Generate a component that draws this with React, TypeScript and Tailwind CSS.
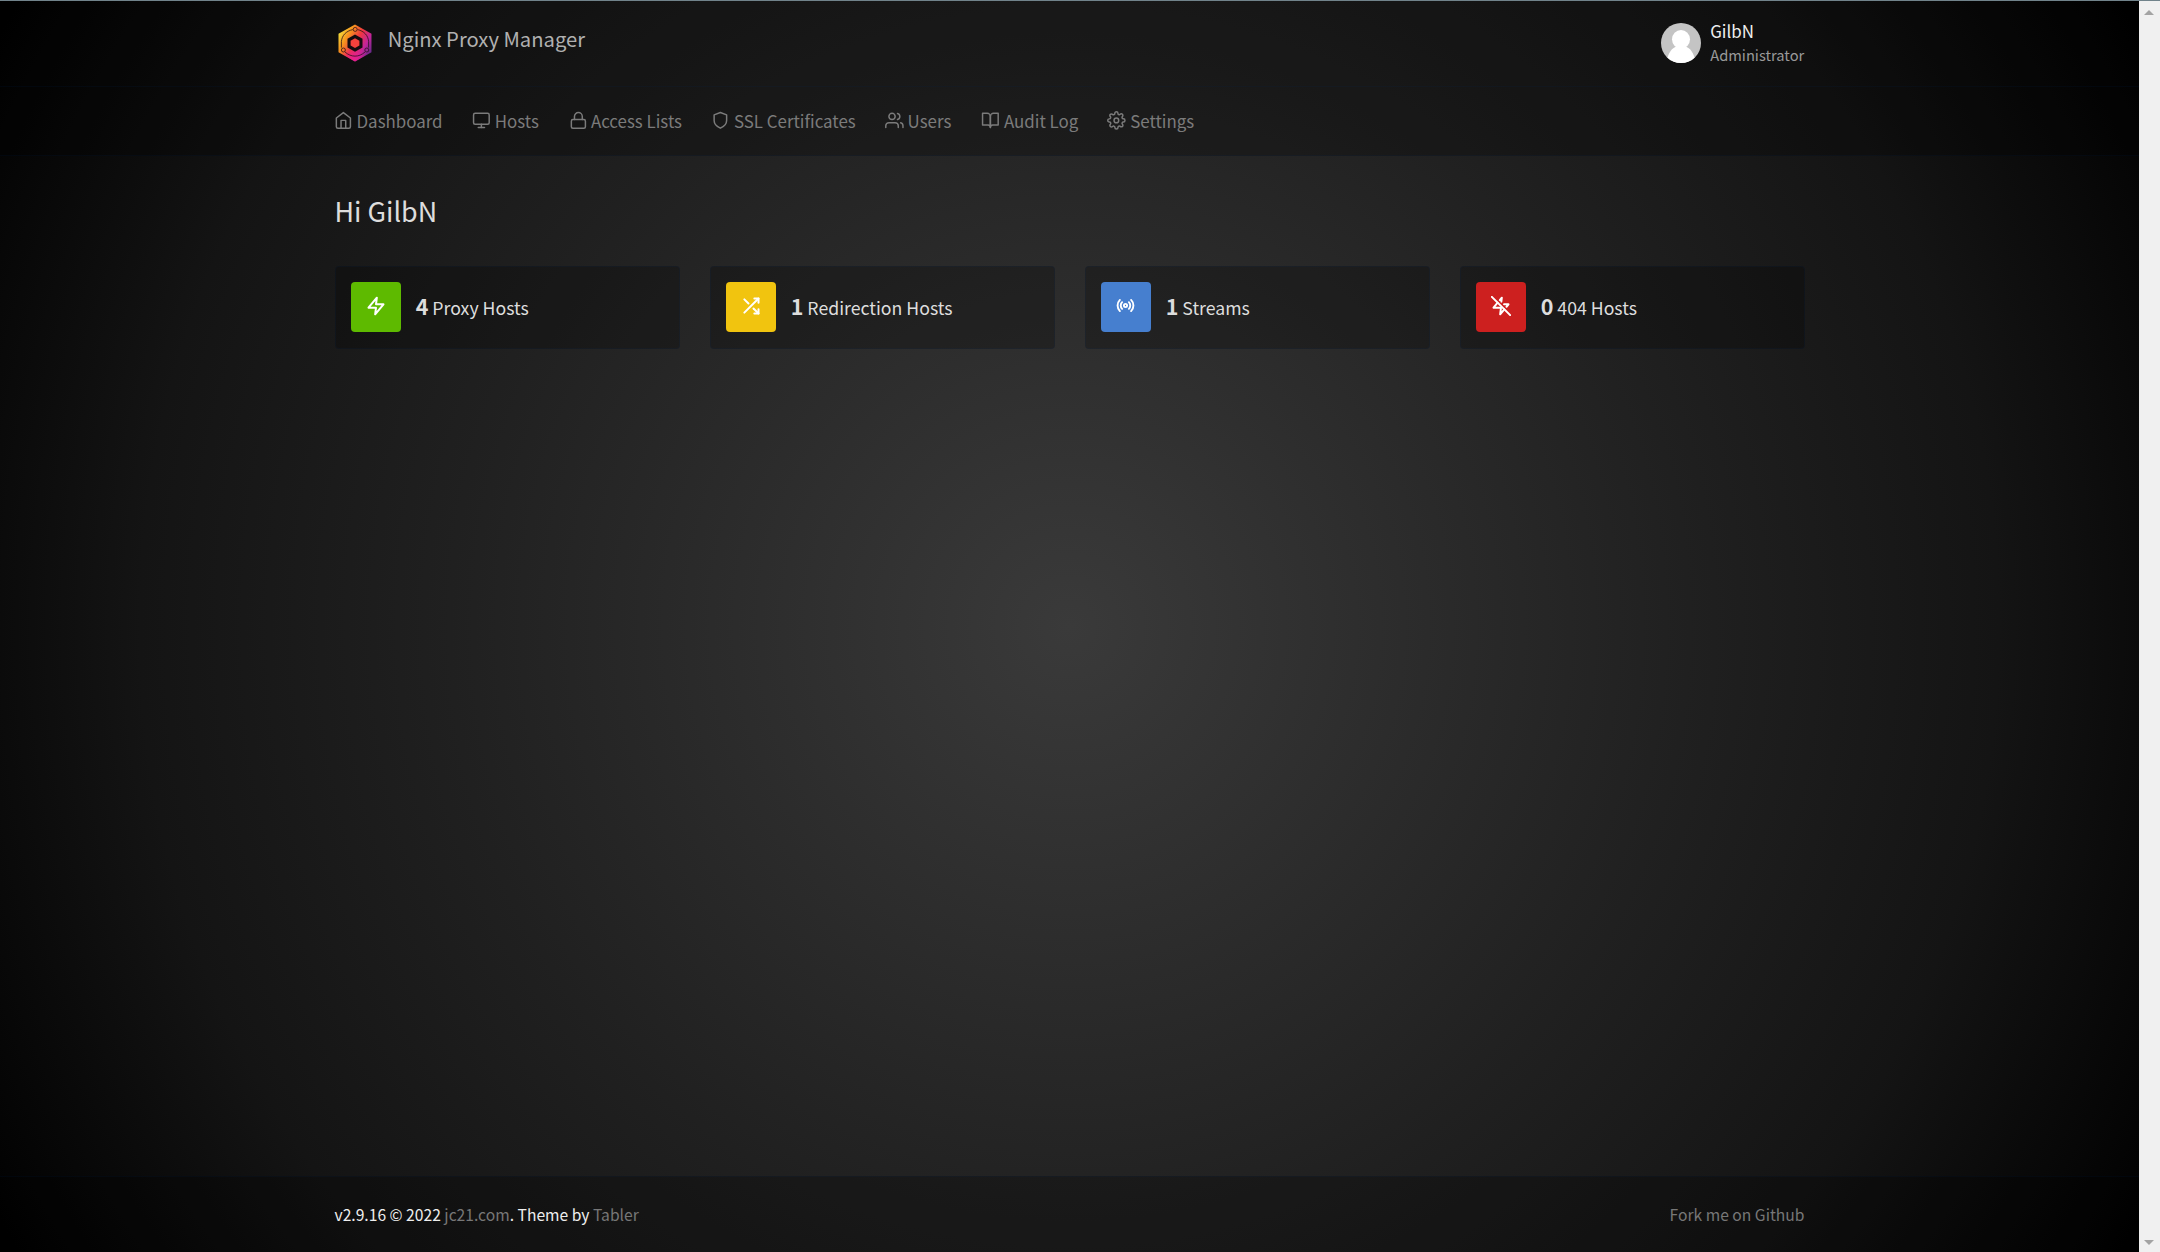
import type { ReactNode } from "react";
import { FiBookOpen, FiHome, FiLock, FiMonitor, FiRadio, FiSettings, FiShield, FiShuffle, FiUsers, FiZap, FiZapOff } from "react-icons/fi";

function Logo() {
  return (
    <svg viewBox="0 0 40 40" className="size-10" aria-hidden="true">
      <defs>
        <linearGradient id="ring" x1="3" y1="10" x2="37" y2="30" gradientUnits="userSpaceOnUse">
          <stop offset="0" stopColor="#f3e33c" />
          <stop offset="0.25" stopColor="#f7941e" />
          <stop offset="0.5" stopColor="#f0373f" />
          <stop offset="0.75" stopColor="#c4249a" />
          <stop offset="1" stopColor="#5b2a86" />
        </linearGradient>
        <radialGradient id="base" cx="19" cy="36" r="13" gradientUnits="userSpaceOnUse">
          <stop offset="0" stopColor="#e91e8c" />
          <stop offset="1" stopColor="#e91e8c" stopOpacity="0" />
        </radialGradient>
      </defs>
      <path d="M20 1.5 36.5 10.8V29.2L20 38.5 3.5 29.2V10.8Z" fill="url(#ring)" />
      <path d="M20 1.5 36.5 10.8V29.2L20 38.5 3.5 29.2V10.8Z" fill="url(#base)" />
      <path d="M20 11.5 27.5 15.8V24.4L20 28.7 12.5 24.4V15.8Z" fill="#150c10" />
      <path d="M20 15.2 24.4 17.7V22.5L20 25 15.6 22.5V17.7Z" fill="#f5413d" />
      <g fill="none" stroke="#241018" strokeOpacity="0.85" strokeWidth="0.9">
        <path d="M17.8 6.6C11 8 7 12.5 6.4 18.5V24.6M22.6 6.6C29 8 33.2 12.5 33.6 18.5V24.6M10 29C16 34.5 24 34.5 30 29" />
        <circle cx="20.2" cy="6.4" r="2" />
        <circle cx="8.4" cy="27" r="2" />
        <circle cx="31.8" cy="27" r="2" />
      </g>
    </svg>
  );
}

function Avatar() {
  return (
    <svg viewBox="0 0 40 40" className="size-10 rounded-full" aria-hidden="true">
      <rect width="40" height="40" fill="#c4c4c4" />
      <ellipse cx="20" cy="16.3" rx="9" ry="9.3" fill="#fff" />
      <path d="M5.5 40C6.5 30 11.5 24 16 23.5H24C28.5 24 33.5 30 34.5 40Z" fill="#fff" />
    </svg>
  );
}

const nav: { label: string; icon: ReactNode; item: string; cell: string }[] = [
  { label: "Dashboard", icon: <FiHome className="-ml-[0.8px] size-[18.75px]" strokeWidth={1.9} />, item: "w-[137.9px]", cell: "w-[22px]" },
  { label: "Hosts", icon: <FiMonitor className="-ml-[0.5px] size-[18.75px]" strokeWidth={1.9} />, item: "w-[97px]", cell: "w-[22.3px]" },
  { label: "Access Lists", icon: <FiLock className="-ml-[0.9px] size-[18.75px]" strokeWidth={1.9} />, item: "w-[143.3px]", cell: "w-[21.5px]" },
  { label: "SSL Certificates", icon: <FiShield className="-ml-[1.3px] size-[18.75px]" strokeWidth={1.9} />, item: "w-[172px]", cell: "w-[21.3px]" },
  { label: "Users", icon: <FiUsers className="ml-[0.3px] size-[18.75px]" strokeWidth={1.9} />, item: "w-[96.6px]", cell: "w-[22.9px]" },
  { label: "Audit Log", icon: <FiBookOpen className="size-[18.75px]" strokeWidth={1.9} />, item: "w-[126.2px]", cell: "w-[22.6px]" },
  { label: "Settings", icon: <FiSettings className="size-[18.75px]" strokeWidth={1.9} />, item: "w-[100px]", cell: "w-[22.8px]" },
];

const cards: { count: number; label: string; color: string; icon: ReactNode }[] = [
  { count: 4, label: "Proxy Hosts", color: "bg-[#5eba00]", icon: <FiZap className="size-5" strokeWidth={2.4} /> },
  { count: 1, label: "Redirection Hosts", color: "bg-[#f1c40f]", icon: <FiShuffle className="size-5" strokeWidth={2.4} /> },
  { count: 1, label: "Streams", color: "bg-[#467fcf]", icon: <FiRadio className="size-[19px]" strokeWidth={2.4} /> },
  { count: 0, label: "404 Hosts", color: "bg-[#cd201f]", icon: <FiZapOff className="size-5" strokeWidth={2.4} /> },
];

export default function App() {
  return (
    <div className="flex h-[1252px] w-[2160px] flex-col overflow-hidden border-t border-[#71838b] font-['Noto_Sans_CJK_SC','Noto_Sans',sans-serif]">
      <div className="flex min-h-0 flex-1">
        <div className="flex w-[2139px] flex-col bg-[radial-gradient(circle,#3a3a3a,#2d2d2d,#202020,#141414,#000000)]">
          <header className="h-[86px] border-b border-[#002864]/12 bg-black/25">
            <div className="mx-auto flex w-[1470px] justify-between">
              <div className="flex">
                <div className="mt-[22px]"><Logo /></div>
                <span className="mt-[23px] ml-[13.2px] text-[20.2px] leading-[30px] text-[#b0b0b0]">Nginx Proxy Manager</span>
              </div>
              <div className="flex">
                <div className="mt-[22px]"><Avatar /></div>
                <div className="mt-[18px] ml-[9.5px] flex w-[94.3px] flex-col">
                  <span className="text-[16.9px] leading-6 text-[#eeeeee]">GilbN</span>
                  <span className="text-[14.7px] leading-6 text-[#999999]">Administrator</span>
                </div>
              </div>
            </div>
          </header>
          <nav className="h-[69px] border-b border-[#002864]/12 bg-black/25">
            <div className="mx-auto flex h-[67px] w-[1470px] items-center">
              {nav.map((n) => (
                <a key={n.label} className={`flex items-center text-[16.9px] leading-6 whitespace-nowrap text-[#7b7b7b] ${n.item}`}>
                  <span className={`shrink-0 ${n.cell}`}>{n.icon}</span>
                  {n.label}
                </a>
              ))}
            </div>
          </nav>
          <main className="mx-auto w-[1470px] flex-1 pt-[35px]">
            <h1 className="text-[26.9px] leading-[40px] text-[#dddddd]">Hi GilbN</h1>
            <div className="mt-[35px] grid grid-cols-4 gap-[30px]">
              {cards.map((c) => (
                <div key={c.label} className="flex h-[83px] items-center rounded-[4px] border border-[#002864]/12 bg-black/25 pb-px pl-[15px]">
                  <div className={`flex size-[50px] justify-center rounded-[4px] pt-[13.5px] text-white ${c.color}`}>{c.icon}</div>
                  <div className="mb-[2px] ml-[15.2px] text-[17.7px] leading-6 text-[#dddddd]">
                    <span className="text-[21.5px] font-bold">{c.count}</span> {c.label}
                  </div>
                </div>
              ))}
            </div>
          </main>
          <footer className="h-[76px] border-t border-[#002864]/12 bg-black/25 pt-[26px]">
            <div className="mx-auto flex w-[1470px] justify-between text-[15.65px] leading-6 text-[#eeeeee]">
              <div>v2.9.16 © 2022 <a className="text-[#777777]">jc21.com</a>. Theme by <a className="text-[#777777]">Tabler</a></div>
              <a className="text-[#777777]">Fork me on Github</a>
            </div>
          </footer>
        </div>
        <div className="flex w-[21px] flex-col items-center justify-between bg-[#f0f0f0] pt-[9px] pr-[2px] pb-[7px]">
          <svg viewBox="0 0 10 5" className="h-[5px] w-[10px]"><path d="M5 0 10 5H0Z" fill="#a3a3a3" /></svg>
          <svg viewBox="0 0 10 5" className="h-[5px] w-[10px]"><path d="M0 0H10L5 5Z" fill="#a3a3a3" /></svg>
        </div>
      </div>
    </div>
  );
}
